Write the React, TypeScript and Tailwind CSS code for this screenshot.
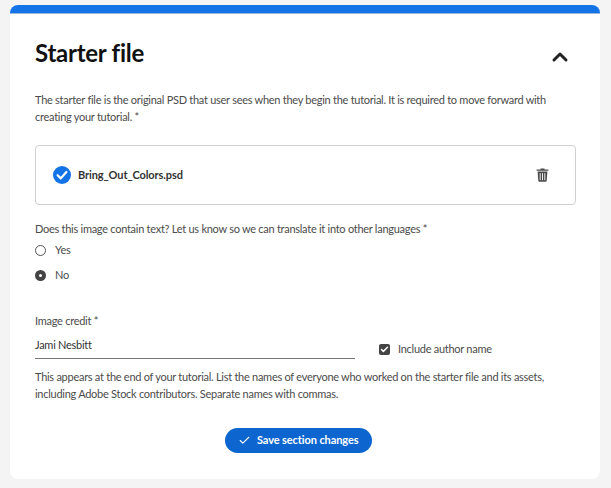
import { Check, ChevronUp } from 'lucide-react'

function TrashIcon() {
  return (
    <svg width="13" height="14" viewBox="0 0 13 14" fill="none">
      <path d="M4.5 1.5V.6h4v.9H12.4v1.3H.6V1.5z" fill="#4b4b4b" />
      <path d="M1.6 3.6h9.8l-.7 9.2q-.1 1-1 1H3.3q-.9 0-1-1z" fill="#4b4b4b" />
      <path d="M4.2 5.2v7M6.5 5.2v7M8.8 5.2v7" stroke="#fff" strokeWidth="0.9" />
    </svg>
  )
}

export default function App() {
  return (
    <div className='font-["Lato","Noto_Sans",sans-serif] tracking-[-0.27px] w-[611px] h-[488px] bg-[#f4f4f5] pt-[5px] pl-[10px] overflow-hidden'>
      <div className="w-[590px] h-[474px] bg-white rounded-[8px] overflow-hidden">
        <div className="h-[9px] bg-[#1473e6] border-b border-b-[#9db8d8]" />
        <div className="pl-[25px] pr-[24px]">
          <div className="flex items-center justify-between h-[77px]">
            <h2 className="text-[24px] leading-none font-bold tracking-[-0.25px] text-[#111]">Starter file</h2>
            <ChevronUp size={24} strokeWidth={3} className="text-[#222] mr-[4px] mt-[9px]" />
          </div>
          <p className="text-[11px] leading-[17px] text-[#4b4b4b]">
            The starter file is the original PSD that user sees when they begin the tutorial. It is required to move forward with creating your tutorial. *
          </p>
          <div className="flex items-center justify-between h-[60px] mt-[20px] border border-[#d0d0d0] rounded-[4px] pl-[17px] pr-[26px]">
            <div className="flex items-center gap-[7px]">
              <svg width="18" height="18" viewBox="0 0 18 18">
                <circle cx="9" cy="9" r="9" fill="#1473e6" />
                <path d="M4.6 9.2l3.2 3.2 5.6-6.4" fill="none" stroke="#fff" strokeWidth="2.2" strokeLinecap="round" strokeLinejoin="round" />
              </svg>
              <span className="text-[11px] font-bold tracking-[-0.1px] text-[#333]">Bring_Out_Colors.psd</span>
            </div>
            <TrashIcon />
          </div>
          <p className="text-[11px] leading-[17px] text-[#4b4b4b] mt-[15px]">
            Does this image contain text? Let us know so we can translate it into other languages *
          </p>
          <div className="flex items-center gap-[9px] mt-[3px] h-[20px]">
            <span className="w-[11px] h-[11px] rounded-full border border-[#555]" />
            <span className="text-[11px] text-[#4b4b4b]">Yes</span>
          </div>
          <div className="flex items-center gap-[9px] mt-[5px] h-[20px]">
            <span className="w-[11px] h-[11px] rounded-full border-[4px] border-[#444] bg-white" />
            <span className="text-[11px] text-[#4b4b4b]">No</span>
          </div>
          <p className="text-[11px] leading-[17px] text-[#4b4b4b] mt-[27px]">Image credit *</p>
          <div className="flex items-center mt-[8px]">
            <div className="w-[320px] h-[22px] border-b border-[#777] text-[11px] leading-[16px] text-[#333]">Jami Nesbitt</div>
            <div className="flex items-center gap-[8px] ml-[24px] mt-[2px]">
              <span className="w-[11px] h-[11px] rounded-[2px] bg-[#444] flex items-center justify-center">
                <Check size={9} strokeWidth={4} className="text-white" />
              </span>
              <span className="text-[11px] text-[#4b4b4b]">Include author name</span>
            </div>
          </div>
          <p className="text-[11px] leading-[17px] text-[#4b4b4b] mt-[9px]">
            This appears at the end of your tutorial. List the names of everyone who worked on the starter file and its assets, including Adobe Stock contributors. Separate names with commas.
          </p>
          <div className="flex mt-[26px] ml-[190px]">
            <button className="flex items-center gap-[6px] h-[25px] w-[147px] pl-[13px] rounded-full bg-[#0d66d0] text-white text-[11px] font-bold tracking-[-0.1px] whitespace-nowrap">
              <Check size={13} strokeWidth={2} />
              Save section changes
            </button>
          </div>
        </div>
      </div>
    </div>
  )
}
